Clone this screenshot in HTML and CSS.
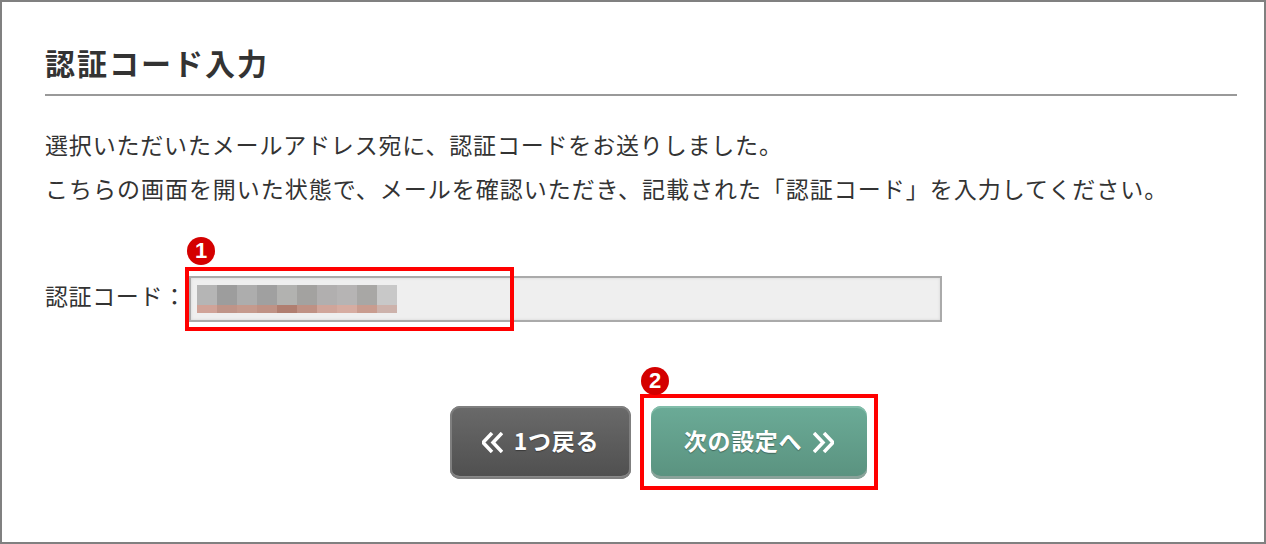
FILE: index.html
```html
<!DOCTYPE html>
<html lang="ja">
<head>
  <meta charset="UTF-8" />
  <title>認証コード入力</title>
  <link rel="stylesheet" href="styles.css">
</head>
<body>

<section class="panel">
  <h2 class="title">認証コード入力</h2>

  <p class="lead lead-first">選択いただいたメールアドレス宛に、認証コードをお送りしました。</p>
  <p class="lead">こちらの画面を開いた状態で、メールを確認いただき、記載された「認証コード」を入力してください。</p>

  <div class="field-row">
    <span class="field-label">認証コード：</span>
    <div class="field">
      <!-- mosaic over the code -->
      <svg class="mosaic" width="200" height="28" viewBox="0 0 200 28">
        <rect x="0" width="20" height="20" fill="#b5b5b5"/><rect x="20" width="20" height="20" fill="#9d9d9d"/>
        <rect x="40" width="20" height="20" fill="#adadad"/><rect x="60" width="20" height="20" fill="#a0a0a0"/>
        <rect x="80" width="20" height="20" fill="#b2b2b0"/><rect x="100" width="20" height="20" fill="#a3a2a0"/>
        <rect x="120" width="20" height="20" fill="#b1afaf"/><rect x="140" width="20" height="20" fill="#b6b4b4"/>
        <rect x="160" width="20" height="20" fill="#a8a7a5"/><rect x="180" width="20" height="20" fill="#c8c8c8"/>
        <rect x="0" y="20" width="20" height="8" fill="#d0a398"/><rect x="20" y="20" width="20" height="8" fill="#bf9488"/>
        <rect x="40" y="20" width="20" height="8" fill="#c59a8d"/><rect x="60" y="20" width="20" height="8" fill="#bf9285"/>
        <rect x="80" y="20" width="20" height="8" fill="#b07e70"/><rect x="100" y="20" width="20" height="8" fill="#bf9184"/>
        <rect x="120" y="20" width="20" height="8" fill="#d0a59a"/><rect x="140" y="20" width="20" height="8" fill="#d6aca1"/>
        <rect x="160" y="20" width="20" height="8" fill="#c99c8f"/><rect x="180" y="20" width="20" height="8" fill="#cdb2ab"/>
      </svg>
      <span class="mark mark-code"></span>
      <span class="badge badge-code">1</span>
    </div>
  </div>

  <div class="actions">
    <button class="btn btn-back">
      <svg class="chevrons" width="21" height="21" viewBox="0 0 21 21">
        <path d="M10 1 1 10.5 10 20M20 1 11 10.5 20 20"/>
      </svg>
      <span class="btn-text">1つ戻る</span>
    </button>
    <div class="next-wrap">
      <button class="btn btn-next">
        <span class="btn-text">次の設定へ</span>
        <svg class="chevrons" width="21" height="21" viewBox="0 0 21 21">
          <path d="M1 1 10 10.5 1 20M11 1 20 10.5 11 20"/>
        </svg>
      </button>
      <span class="mark mark-next"></span>
      <span class="badge badge-next">2</span>
    </div>
  </div>
</section>

</body>
</html>
```

FILE: styles.css
```css
* {
  box-sizing: border-box;
}
html, body {
  margin: 0;
  height: 544px;
  overflow: hidden;
}
body {
  font-family: "Noto Sans CJK JP", "Liberation Sans", sans-serif;
  background-color: #fff;
  color: #333;
}
.panel {
  height: 544px;
  border: 2px solid #808080;
  padding: 38px 27px 0 43px;
}
.title {
  margin: 0 0 26px;
  height: 56px;
  border-bottom: 2px solid #999;
  font-size: 30px;
  line-height: 44px;
  letter-spacing: 2px;
  font-weight: 700;
  color: #333;
}
.lead {
  margin: 0;
  font-size: 23px;
  line-height: 44px;
  letter-spacing: 0.98px;
  white-space: nowrap;
}
.lead-first {
  letter-spacing: 0.82px;
}
.field-row {
  display: flex;
  align-items: center;
  margin-top: 66px;
}
.field-label {
  width: 144px;
  padding-bottom: 8px;
  font-size: 23px;
  letter-spacing: 0.6px;
  white-space: nowrap;
}
.field {
  position: relative;
  width: 753px;
  height: 46px;
  padding: 7px 6px;
  background-color: #efefef;
  border: 2px solid #aaa;
  box-shadow: inset 0 0 3px #d4d4d4;
}
.mosaic {
  display: block;
}
.mark {
  position: absolute;
  border: 4px solid #f00;
}
.mark-code {
  left: -6px;
  top: -11px;
  width: 329px;
  height: 64px;
}
.badge {
  position: absolute;
  width: 28px;
  height: 28px;
  border-radius: 50%;
  background-color: #d40000;
  color: #fff;
  font-family: "Liberation Sans", sans-serif;
  font-size: 22px;
  font-weight: 700;
  line-height: 28px;
  text-align: center;
}
.badge-code {
  left: -4px;
  top: -41px;
}
.badge-next {
  left: -10px;
  top: -39px;
}
.actions {
  display: flex;
  gap: 20px;
  margin-top: 84px;
  margin-left: 405px;
}
.next-wrap {
  position: relative;
}
.btn {
  display: flex;
  align-items: center;
  justify-content: center;
  height: 73px;
  padding: 0;
  border: none;
  border-radius: 10px;
  color: #fff;
  font-family: inherit;
  font-size: 23px;
  font-weight: 700;
  letter-spacing: 0.7px;
  text-shadow: 0 1px 1px rgba(0,0,0,0.35);
  cursor: pointer;
}
.btn-text {
  margin-bottom: 6px;
}
.btn-back {
  gap: 11px;
  width: 181px;
  background: linear-gradient(#6a6a6a, #4f4f4f);
  box-shadow: inset 0 0 0 2px #7f7f7f, inset 0 -3px 0 #8b8b8b;
}
.btn-next {
  gap: 11px;
  width: 216px;
  background: linear-gradient(#6bab97, #5a927f);
  box-shadow: inset 0 2px 0 #82bdaa, inset 0 -3px 0 #8aa39a;
}
.chevrons {
  fill: none;
  stroke: #fff;
  stroke-width: 3.5;
}
.mark-next {
  left: -11px;
  top: -12px;
  width: 238px;
  height: 96px;
}
```
